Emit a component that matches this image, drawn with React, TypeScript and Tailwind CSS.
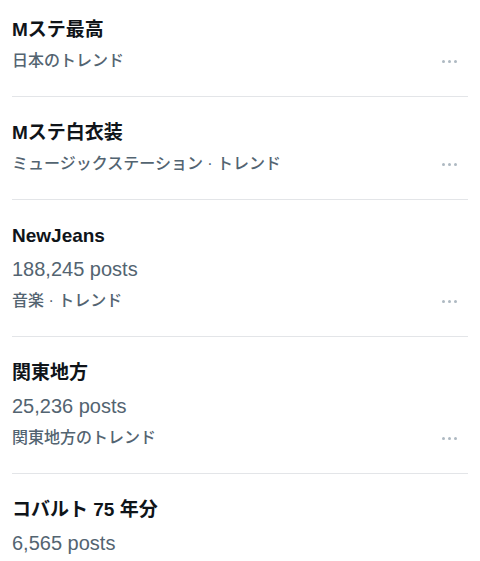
import React from 'react';

type Trend = {
  title: string;
  posts?: string;
  category?: string;
};

const trends: Trend[] = [
  { title: 'Mステ最高', category: '日本のトレンド' },
  { title: 'Mステ白衣装', category: 'ミュージックステーション · トレンド' },
  { title: 'NewJeans', posts: '188,245 posts', category: '音楽 · トレンド' },
  { title: '関東地方', posts: '25,236 posts', category: '関東地方のトレンド' },
  { title: 'コバルト 75 年分', posts: '6,565 posts' },
];

function MoreDots() {
  return (
    <div className="flex items-center gap-[3px] mr-[11px] mb-[10px]">
      <span className="w-[3px] h-[3px] rounded-full bg-[#aeb9c2]" />
      <span className="w-[3px] h-[3px] rounded-full bg-[#aeb9c2]" />
      <span className="w-[3px] h-[3px] rounded-full bg-[#aeb9c2]" />
    </div>
  );
}

function TrendRow({ trend, last }: { trend: Trend; last: boolean }) {
  return (
    <div className={`mx-3 pt-6 ${last ? '' : 'pb-[23px] border-b border-[#e3e5e8]'}`}>
      <div className="flex items-end justify-between">
        <div className="flex flex-col">
          <div className="text-[19px] leading-6 font-bold text-[#0f1419]">{trend.title}</div>
          {trend.posts && (
            <div className="mt-2 text-[20px] leading-[26px] text-[#536471]">{trend.posts}</div>
          )}
          {trend.category && (
            <div className="mt-[7px] text-[16px] leading-6 font-medium text-[#536471]">{trend.category}</div>
          )}
        </div>
        {trend.category && <MoreDots />}
      </div>
    </div>
  );
}

export default function App() {
  return (
    <div
      className="w-[480px] h-[561px] overflow-hidden bg-white"
      style={{ fontFamily: '"Liberation Sans", "Noto Sans CJK JP", sans-serif' }}
    >
      <div className="-mt-[6px]">
        {trends.map((trend, i) => (
          <TrendRow key={trend.title} trend={trend} last={i === trends.length - 1} />
        ))}
      </div>
    </div>
  );
}
